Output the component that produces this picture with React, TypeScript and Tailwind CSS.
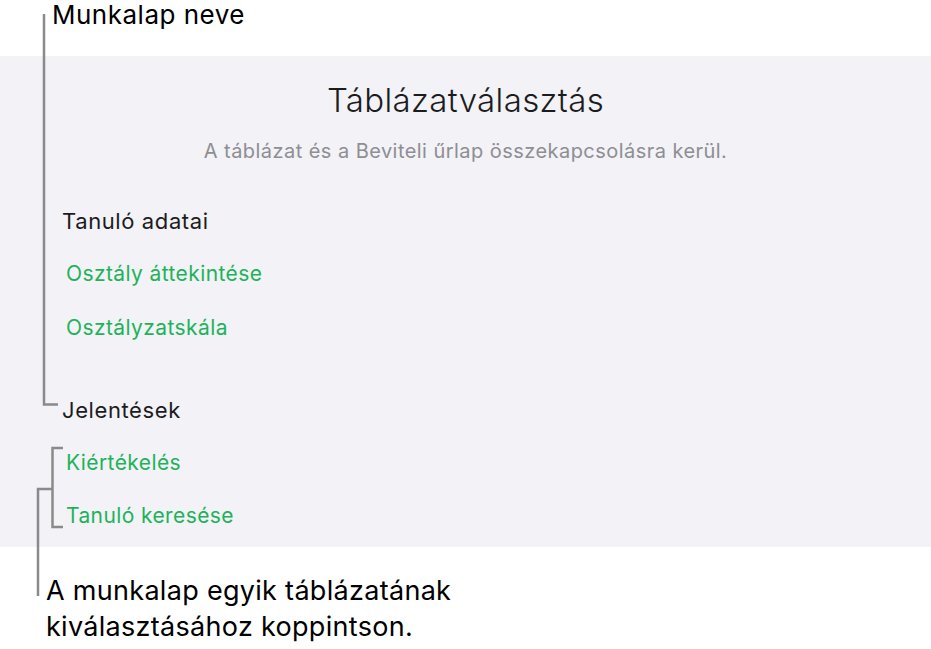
const font = { fontFamily: "Inter, Roboto, 'Noto Sans', sans-serif" };

function Callouts() {
  return (
    <svg className="absolute inset-0 pointer-events-none" width="931" height="649" viewBox="0 0 931 649" fill="none" stroke="#8a8a8a" strokeWidth="2.5">
      <path d="M44 14 V404.5 H58" />
      <path d="M63 448 H52.5 V527 H63" />
      <path d="M52.5 489 H38 V596" />
    </svg>
  );
}

export default function App() {
  return (
    <div className="relative w-[931px] h-[649px] bg-white overflow-hidden" style={font}>
      <div className="h-[56px] pl-[52px] text-[26px] leading-[30px] tracking-[0.5px] text-black">Munkalap neve</div>

      <div className="h-[491px] bg-[#f2f2f7] flex flex-col">
        <h1 className="mt-[24px] text-center text-[33px] leading-[40px] tracking-[0.35px] font-light text-[#1c1c1e]">Táblázatválasztás</h1>
        <p className="mt-[19px] text-center text-[20px] leading-[24px] tracking-[0.45px] text-[#8e8e93]">A táblázat és a Beviteli űrlap összekapcsolásra kerül.</p>

        <div className="mt-[44px] pl-[62px] text-[22px] leading-[28px] tracking-[0.6px] text-[#1c1c1e]">Tanuló adatai</div>
        <div className="mt-[25px] pl-[66px] text-[21px] leading-[28px] tracking-[0.4px] text-[#1fb25a]">Osztály áttekintése</div>
        <div className="mt-[26px] pl-[66px] text-[21px] leading-[28px] tracking-[0.4px] text-[#1fb25a]">Osztályzatskála</div>

        <div className="mt-[54px] pl-[62px] text-[22px] leading-[28px] tracking-[0.6px] text-[#1c1c1e]">Jelentések</div>
        <div className="mt-[25px] pl-[66px] text-[21px] leading-[28px] tracking-[0.4px] text-[#1fb25a]">Kiértékelés</div>
        <div className="mt-[25px] pl-[66px] text-[21px] leading-[28px] tracking-[0.4px] text-[#1fb25a]">Tanuló keresése</div>
      </div>

      <div className="pl-[46px] pt-[26px] text-[27px] leading-[36px] tracking-[0.3px] text-black">
        A munkalap egyik táblázatának
        <br />
        kiválasztásához koppintson.
      </div>

      <Callouts />
    </div>
  );
}
